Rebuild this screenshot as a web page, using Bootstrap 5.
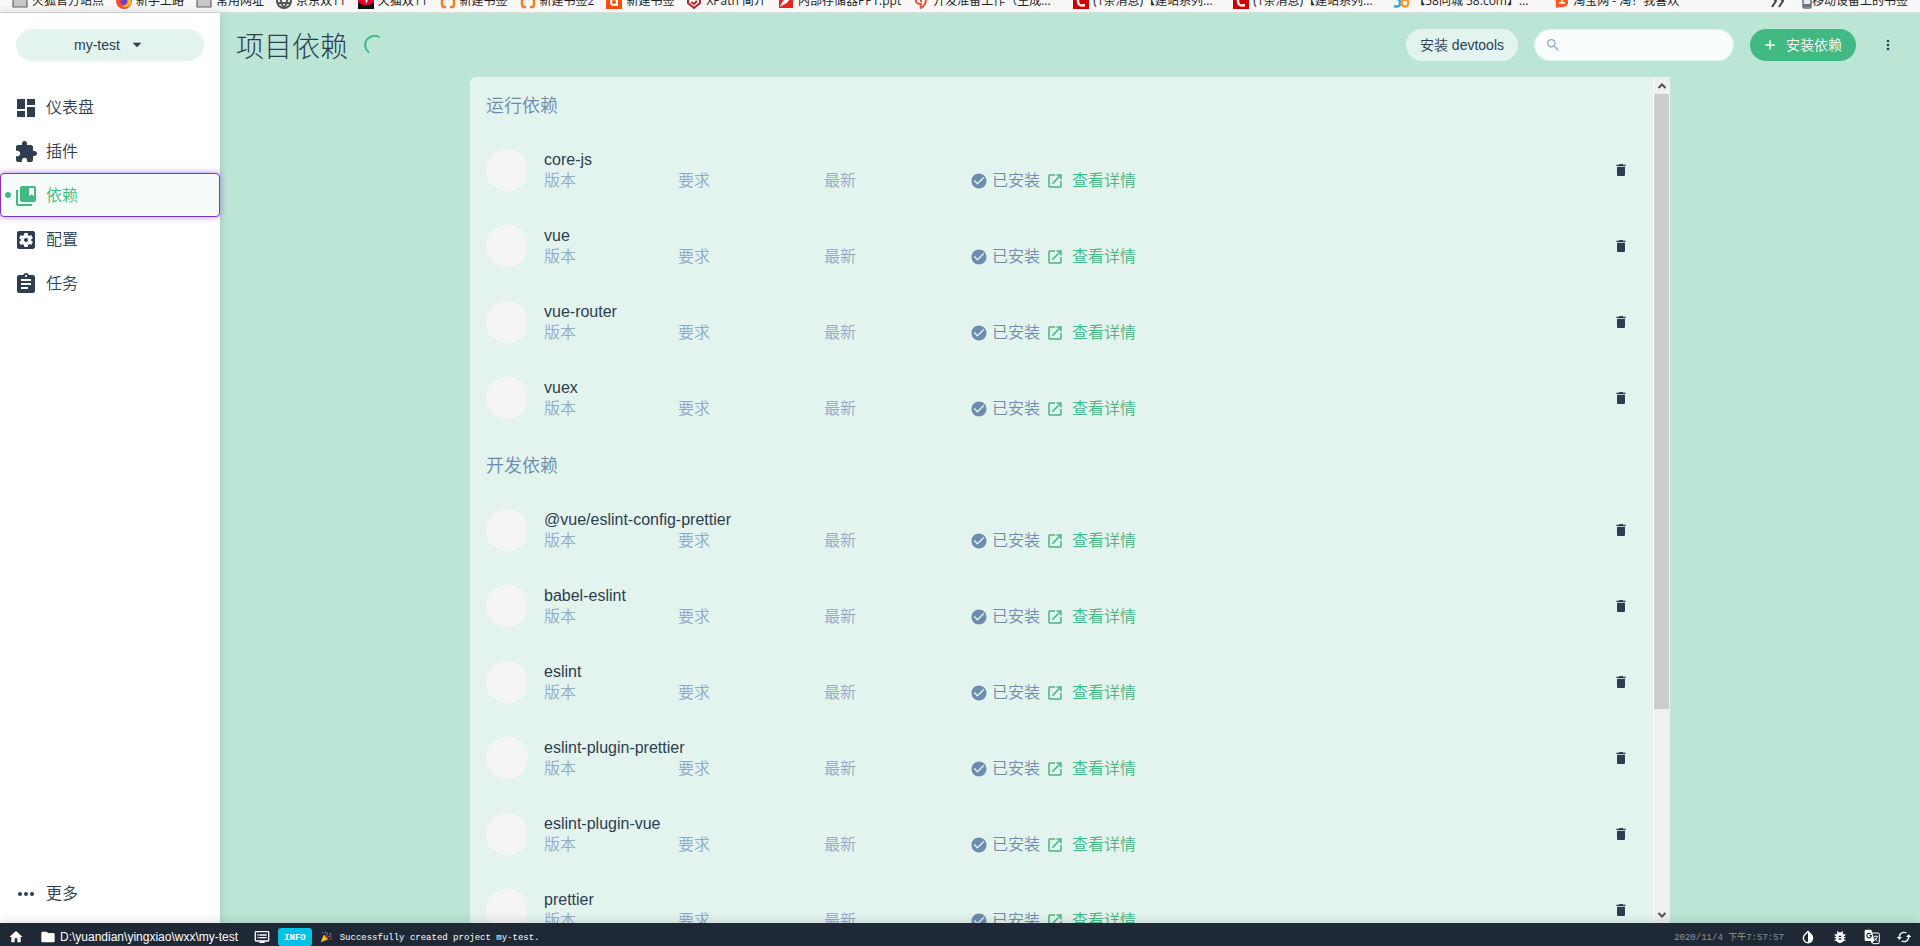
<!DOCTYPE html>
<html lang="zh-CN">
<head>
<meta charset="utf-8">
<meta name="viewport" content="width=device-width, initial-scale=1">
<title>项目依赖 - my-test</title>
<link href="https://cdn.jsdelivr.net/npm/bootstrap@5.3.0/dist/css/bootstrap.min.css" rel="stylesheet">
<style>
  :root { --ink:#2c3e50; --mint:#bbe6d6; --pale:#e3f4ee; --green:#42b983; --steel:#6b8bb0; --steel-soft:#90abc8; }
  body { font-family:"Liberation Sans","Noto Sans CJK SC",sans-serif; font-size:16px; line-height:22px; font-weight:350; color:var(--ink); }
  svg { fill:currentColor; display:block; flex:none; }
  .i16 { width:16px; height:16px; } .i18 { width:18px; height:18px; } .i24 { width:24px; height:24px; }

  /* bookmarks strip */
  .marks { height:13px; background:#f8f8f8; border-bottom:1px solid #dcdcdc; font-family:"Open Sans","Noto Sans CJK SC",sans-serif; font-size:12px; line-height:16px; padding:0 12px; font-weight:400; }
  .marks a { color:#222; height:19px; margin-right:12px; }
  .marks .wide { width:128px; }
  .marks a:last-child { margin-right:0; }

  /* sidebar */
  .side { width:220px; background:#fff; box-shadow:0 0 10px rgba(0,0,0,.15); z-index:2; }
  .pill { height:32px; border:0; border-radius:16px; font-size:14px; line-height:20px; padding:0 14px; background:var(--pale); color:var(--ink); font-weight:350; }
  .pill-green { background:var(--green); color:#fff; padding-left:12px; }
  .side .nav-link { height:44px; padding:2px 14px 0; color:var(--ink); border-radius:4px; }
  .side .nav-link.active { color:var(--green); background:#f5fbf8; border:1px solid #8130c8; padding:1px 13px 0; box-shadow:0 0 6px #b583e4; }
  .dot { position:absolute; left:4px; top:18px; width:6px; height:6px; border-radius:50%; background:var(--green); }

  /* page head */
  .head { padding:16px; }
  .head h1 { font-size:28px; line-height:32px; height:32px; padding-top:3px; font-weight:300; }
  .find { width:200px; height:32px; border-radius:16px; background:#f8fcfb; border:1px solid var(--pale); padding:0 10px; color:var(--steel-soft); }
  .find input { outline:0; min-width:0; font-size:14px; }
  .plain { border:0; background:none; padding:0; color:inherit; }

  /* dependency list */
  .panel { max-width:1200px; background:var(--pale); border-radius:6px 0 0 0; min-height:0; }
  .panel h2 { height:56px; padding:17px 16px 0; margin:0; font-size:18px; line-height:26px; font-weight:350; color:var(--steel); }
  .panel section:first-child h2 { height:55px; padding-top:16px; }
  .dep { height:76px; padding:0 24px 0 16px; }
  .dep-text { padding-top:2px; }
  .avatar { width:42px; height:42px; border-radius:50%; background:#f4f4f4; flex:none; }
  .dep-name { line-height:20px; }
  .meta { color:var(--steel-soft); }
  .col-a { width:134px; } .col-b { width:146px; }
  .state { color:var(--steel); }
  .more-link { color:var(--green); margin-left:6px; }
  .track { width:17px; background:#f0f0f0; border-left:1px solid #fff; color:#505050; }
  .thumb { background:#cdcdcd; height:615px; margin-right:1px; }

  /* status bar */
  .status-wrap { height:23px; background:#1e2935; color:#fff; z-index:3; box-shadow:0 -2px 10px rgba(0,0,0,.12); }
  .status { height:28px; padding:0 8px; font-weight:400; }
  .path { font-size:12px; line-height:20px; }
  .mono { font-family:"Liberation Mono","Noto Sans CJK SC",monospace; font-size:9px; line-height:14px; padding-top:2px; }
  .tag { background:#03c2e6; border-radius:3px; height:18px; padding:3px 6px; font-weight:700; }
  .when { color:#8e949a; }
</style>
</head>
<body class="vh-100 overflow-hidden d-flex flex-column">

<svg class="d-none">
  <symbol id="dashboard" viewBox="0 0 24 24"><path d="M3 13h8V3H3v10zm0 8h8v-6H3v6zm10 0h8V11h-8v10zm0-18v6h8V3h-8z"/></symbol>
  <symbol id="extension" viewBox="0 0 24 24"><path d="M20.5 11H19V7c0-1.1-.9-2-2-2h-4V3.500C13 2.120 11.880 1 10.500 1S8 2.120 8 3.500V5H4c-1.100 0-1.990.9-1.990 2v3.800H3.500c1.490 0 2.700 1.210 2.700 2.700s-1.210 2.700-2.700 2.700H2V20c0 1.100.9 2 2 2h3.800v-1.500c0-1.490 1.210-2.700 2.700-2.700 1.490 0 2.700 1.210 2.700 2.700V22H17c1.100 0 2-.9 2-2v-4h1.500c1.380 0 2.500-1.120 2.500-2.500S21.880 11 20.500 11z"/></symbol>
  <symbol id="books" viewBox="0 0 24 24"><path d="M4 6H2v14c0 1.100.9 2 2 2h14v-2H4V6z"/><path d="M20 2H8c-1.100 0-2 .9-2 2v12c0 1.100.9 2 2 2h12c1.100 0 2-.9 2-2V4c0-1.100-.9-2-2-2zm0 10l-2.500-1.500L15 12V4h5v8z"/></symbol>
  <symbol id="settings" viewBox="0 0 24 24"><path d="M12 10c-1.100 0-2 .9-2 2s.9 2 2 2 2-.9 2-2-.9-2-2-2zm7-7H5c-1.110 0-2 .9-2 2v14c0 1.100.89 2 2 2h14c1.110 0 2-.9 2-2V5c0-1.100-.89-2-2-2zm-1.750 9c0 .23-.02.46-.05.68l1.480 1.160c.13.11.17.3.08.45l-1.400 2.420c-.09.15-.27.21-.43.15l-1.740-.7c-.36.28-.76.51-1.180.69l-.26 1.850c-.03.17-.18.3-.35.3h-2.800c-.17 0-.32-.13-.35-.29l-.26-1.850c-.43-.18-.82-.41-1.180-.69l-1.740.7c-.16.06-.34 0-.43-.15l-1.400-2.420c-.09-.15-.05-.34.08-.45l1.480-1.160c-.03-.23-.05-.46-.05-.69 0-.23.02-.46.05-.68l-1.480-1.160c-.13-.11-.17-.3-.08-.45l1.400-2.420c.09-.15.27-.21.43-.15l1.740.7c.36-.28.76-.51 1.180-.69l.26-1.850c.03-.17.18-.3.35-.3h2.800c.17 0 .32.13.35.29l.26 1.850c.43.18.82.41 1.180.69l1.740-.7c.16-.06.34 0 .43.15l1.400 2.420c.09.15.05.34-.08.45l-1.480 1.160c.03.23.05.46.05.69z"/></symbol>
  <symbol id="tasks" viewBox="0 0 24 24"><path d="M19 3h-4.180C14.400 1.840 13.300 1 12 1c-1.300 0-2.400.84-2.820 2H5c-1.100 0-2 .9-2 2v14c0 1.100.9 2 2 2h14c1.100 0 2-.9 2-2V5c0-1.100-.9-2-2-2zm-7 0c.55 0 1 .45 1 1s-.45 1-1 1-1-.45-1-1 .45-1 1-1zm2 14H7v-2h7v2zm3-4H7v-2h10v2zm0-4H7V7h10v2z"/></symbol>
  <symbol id="dots" viewBox="0 0 24 24"><circle cx="6" cy="12" r="2"/><circle cx="12" cy="12" r="2"/><circle cx="18" cy="12" r="2"/></symbol>
  <symbol id="kebab" viewBox="0 0 24 24"><circle cx="12" cy="6" r="2"/><circle cx="12" cy="12" r="2"/><circle cx="12" cy="18" r="2"/></symbol>
  <symbol id="search" viewBox="0 0 24 24"><path d="M15.500 14h-.79l-.28-.27C15.410 12.590 16 11.110 16 9.500 16 5.910 13.090 3 9.500 3S3 5.910 3 9.500 5.910 16 9.500 16c1.610 0 3.090-.59 4.230-1.570l.27.28v.79l5 4.990L20.490 19l-4.990-5zm-6 0C7.010 14 5 11.990 5 9.500S7.010 5 9.500 5 14 7.010 14 9.500 11.990 14 9.500 14z"/></symbol>
  <symbol id="plus" viewBox="0 0 24 24"><path d="M19 13h-6v6h-2v-6H5v-2h6V5h2v6h6v2z"/></symbol>
  <symbol id="caret" viewBox="0 0 24 24"><path d="M6 9l6 6 6-6z"/></symbol>
  <symbol id="trash" viewBox="0 0 24 24"><path d="M6 19c0 1.100.9 2 2 2h8c1.100 0 2-.9 2-2V7H6v12zM19 4h-3.500l-1-1h-5l-1 1H5v2h14V4z"/></symbol>
  <symbol id="check" viewBox="0 0 24 24"><path d="M12 2C6.480 2 2 6.480 2 12s4.480 10 10 10 10-4.480 10-10S17.520 2 12 2zm-2 15l-5-5 1.410-1.410L10 14.170l7.590-7.590L19 8l-9 9z"/></symbol>
  <symbol id="open" viewBox="0 0 24 24"><path d="M19 19H5V5h7V3H5c-1.110 0-2 .9-2 2v14c0 1.100.89 2 2 2h14c1.100 0 2-.9 2-2v-7h-2v7zM14 3v2h3.590l-9.830 9.830 1.410 1.410L19 6.410V10h2V3h-7z"/></symbol>
  <symbol id="home" viewBox="0 0 24 24"><path d="M10 20v-6h4v6h5v-8h3L12 3 2 12h3v8z"/></symbol>
  <symbol id="folder" viewBox="0 0 24 24"><path d="M10 4H4c-1.100 0-1.990.9-1.990 2L2 18c0 1.100.9 2 2 2h16c1.100 0 2-.9 2-2V8c0-1.100-.9-2-2-2h-8l-2-2z"/></symbol>
  <symbol id="dvr" viewBox="0 0 24 24"><path d="M21 3H3c-1.100 0-2 .9-2 2v12c0 1.100.9 2 2 2h5v2h8v-2h5c1.100 0 1.990-.9 1.990-2L23 5c0-1.100-.9-2-2-2zm0 14H3V5h18v12zm-2-9H8v2h11V8zm0 4H8v2h11v-2zM7 8H5v2h2V8zm0 4H5v2h2v-2z"/></symbol>
  <symbol id="invert" viewBox="0 0 24 24"><path d="M17.660 7.930L12 2.270 6.340 7.930c-3.120 3.120-3.120 8.190 0 11.310C7.900 20.800 9.950 21.580 12 21.580c2.050 0 4.100-.78 5.660-2.340 3.120-3.120 3.120-8.190 0-11.310zM12 19.590c-1.600 0-3.110-.62-4.240-1.760C6.620 16.690 6 15.190 6 13.590s.62-3.110 1.760-4.240L12 5.100v14.490z"/></symbol>
  <symbol id="bug" viewBox="0 0 24 24"><path d="M20 8h-2.810c-.45-.78-1.070-1.450-1.820-1.960L17 4.410 15.590 3l-2.170 2.170C12.960 5.060 12.490 5 12 5c-.49 0-.96.06-1.410.17L8.410 3 7 4.410l1.620 1.630C7.880 6.550 7.260 7.220 6.810 8H4v2h2.090c-.05.33-.09.66-.09 1v1H4v2h2v1c0 .34.04.67.09 1H4v2h2.810c1.040 1.790 2.970 3 5.190 3s4.150-1.210 5.190-3H20v-2h-2.090c.05-.33.09-.66.09-1v-1h2v-2h-2v-1c0-.34-.04-.67-.09-1H20V8zm-6 8h-4v-2h4v2zm0-4h-4v-2h4v2z"/></symbol>
  <symbol id="translate" viewBox="0 0 24 24"><path d="M12 6h9a2 2 0 0 1 2 2v12a2 2 0 0 1-2 2h-8" fill="none" stroke="currentColor" stroke-width="1.500"/><path d="M3 1h8l5 17H3a2 2 0 0 1-2-2V3c0-1.100.9-2 2-2z"/><path d="M10 18h5l-3 4z"/><path d="M10 7.500A3.400 3.400 0 1 0 11 10H8" fill="none" stroke="#1e2935" stroke-width="1.700"/><path d="M15 11h6M18 10v1M20 11c-.5 3-2 5-4 6M16 13c1 2 2.500 4 4.500 5.500" fill="none" stroke="currentColor" stroke-width="1.300"/></symbol>
  <symbol id="sync" viewBox="0 0 24 24"><path d="M19 8l-4 4h3c0 3.310-2.690 6-6 6-1.010 0-1.970-.25-2.800-.7l-1.460 1.460C8.970 19.540 10.430 20 12 20c4.420 0 8-3.580 8-8h3l-4-4zM6 12c0-3.310 2.690-6 6-6 1.010 0 1.970.25 2.800.7l1.460-1.460C15.030 4.460 13.570 4 12 4c-4.420 0-8 3.580-8 8H1l4 4 4-4H6z"/></symbol>
  <symbol id="b-folder" viewBox="0 0 16 16"><path d="M1 2h6l1 2h7v10H1z" fill="#c9c9c9" stroke="#666" stroke-width="1.200"/></symbol>
  <symbol id="b-fox" viewBox="0 0 16 16"><circle cx="8" cy="8" r="8" fill="#ff4b2b"/><path d="M10 1c5 2 6 7 5 10-3 4-8 4-9 2 5 0 6-5 4-12z" fill="#ffb52e"/><circle cx="8" cy="8" r="3.500" fill="#6b3fd0"/></symbol>
  <symbol id="b-globe" viewBox="0 0 16 16"><g fill="none" stroke="#555" stroke-width="2"><circle cx="8" cy="8" r="7"/><path d="M1 10h14M5 2c-1 5 0 9 3 13 3-4 4-8 3-13"/></g></symbol>
  <symbol id="b-cat" viewBox="0 0 16 16"><path d="M0 0h16v16H0z" fill="#111"/><path d="M0 0h16v9q-8 7-16 0z" fill="#e60026"/><path d="M7 5h3l-1 5H8z" fill="#fff"/></symbol>
  <symbol id="b-brackets" viewBox="0 0 16 16"><path d="M6 2H4q-2 0-2 3v6q0 3 2 3h2M10 2h2q2 0 2 3v6q0 3-2 3h-2" fill="none" stroke="#ff7a1a" stroke-width="2.500"/></symbol>
  <symbol id="b-orange" viewBox="0 0 16 16"><path d="M0 0h16v16H0z" fill="#ff4d00"/><circle cx="8" cy="9" r="3" fill="none" stroke="#fff" stroke-width="2"/><path d="M11 5v8" stroke="#fff" stroke-width="2"/></symbol>
  <symbol id="b-shield" viewBox="0 0 16 16"><path d="M8 1l6 4v5l-6 5-6-5V5z" fill="none" stroke="#b3282d" stroke-width="2"/><path d="M5 9l3 2 3-3" fill="none" stroke="#b3282d" stroke-width="2"/></symbol>
  <symbol id="b-doc" viewBox="0 0 16 16"><path d="M1 1h14v14H1z" fill="#e8281e"/><path d="M2 14q2-8 11-11-2 7-8 9z" fill="#fff"/></symbol>
  <symbol id="b-flame" viewBox="0 0 16 16"><path d="M3 6q-1 5 5 5-1 3 0 4 5-3 5-9M8 3v6" fill="none" stroke="#f0503c" stroke-width="2"/></symbol>
  <symbol id="b-c" viewBox="0 0 16 16"><path d="M0 0h16v16H0z" fill="#d00000"/><path d="M12 5Q5 2 5 8t7 4" fill="none" stroke="#fff" stroke-width="2.500"/></symbol>
  <symbol id="b-58" viewBox="0 0 16 16"><path d="M1 13q6 2 6-3T2 6" fill="none" stroke="#2aa5e8" stroke-width="2.500"/><circle cx="12" cy="10" r="3.500" fill="none" stroke="#ff9420" stroke-width="2.500"/></symbol>
  <symbol id="b-tao" viewBox="0 0 16 16"><path d="M2 2h13v9q-3 4-8 3l-4 1v-3z" fill="#ff5a1f"/><path d="M6 10h6M9 5v5" stroke="#fff" stroke-width="1.500"/></symbol>
  <symbol id="b-phone" viewBox="0 0 10 16"><rect x="1" y="1" width="8" height="14" rx="1.500" fill="#e8eaf0" stroke="#68707c" stroke-width="1.500"/><path d="M1 11h8v3H1z" fill="#68707c"/></symbol>
  <symbol id="popper" viewBox="0 0 16 16"><path d="M1 15L5 5l6 6z" fill="#ffc32c"/><path d="M5 5q4 1 6 6-3 0-6-6z" fill="#a86a12"/><path d="M8 6q3-1 2-4M10 8q2-2 5-1" fill="none" stroke="#e94b5b" stroke-width="1.300"/><path d="M3 2h2v1H3zM13 3h2v2h-2z" fill="#3aa0f3"/><path d="M13 10h2v1h-2zM7 1h1v2H7z" fill="#ffc32c"/></symbol>
</svg>

<nav class="marks d-flex align-items-end overflow-hidden text-nowrap flex-shrink-0" id="marks" aria-label="书签"></nav>

<div class="d-flex flex-grow-1" style="min-height:0">
  <aside class="side d-flex flex-column flex-shrink-0 position-relative">
    <div class="p-3 d-grid">
      <button type="button" class="pill d-flex align-items-center justify-content-center gap-2"><span>my-test</span><svg class="i18"><use href="#caret"/></svg></button>
    </div>
    <nav class="nav flex-column pt-2 flex-grow-1 pb-2">
      <a class="nav-link d-flex align-items-center gap-2" href="#"><svg class="i24"><use href="#dashboard"/></svg>仪表盘</a>
      <a class="nav-link d-flex align-items-center gap-2" href="#"><svg class="i24"><use href="#extension"/></svg>插件</a>
      <a class="nav-link active d-flex align-items-center gap-2 position-relative" href="#" aria-current="page"><i class="dot"></i><svg class="i24"><use href="#books"/></svg>依赖</a>
      <a class="nav-link d-flex align-items-center gap-2" href="#"><svg class="i24"><use href="#settings"/></svg>配置</a>
      <a class="nav-link d-flex align-items-center gap-2" href="#"><svg class="i24"><use href="#tasks"/></svg>任务</a>
      <a class="nav-link d-flex align-items-center gap-2 mt-auto" href="#"><svg class="i24"><use href="#dots"/></svg>更多</a>
    </nav>
  </aside>

  <main class="flex-grow-1 d-flex flex-column" style="background:var(--mint);min-width:0">
    <header class="head d-flex align-items-center gap-3">
      <h1 class="m-0">项目依赖</h1>
      <svg width="20" height="20" viewBox="0 0 20 20" class="me-auto" role="img" aria-label="加载中"><path d="M15.500 2.500A9 9 0 0 0 5 17.500" fill="none" stroke="#42b983" stroke-width="2"/></svg>
      <button type="button" class="pill">安装 devtools</button>
      <label class="find d-flex align-items-center gap-2"><svg class="i16"><use href="#search"/></svg><input type="search" class="border-0 bg-transparent flex-grow-1" aria-label="搜索"></label>
      <button type="button" class="pill pill-green d-flex align-items-center gap-2"><svg class="i16"><use href="#plus"/></svg>安装依赖</button>
      <button type="button" class="plain px-2" aria-label="更多操作"><svg class="i16"><use href="#kebab"/></svg></button>
    </header>

    <div class="panel w-100 mx-auto flex-grow-1 d-flex overflow-hidden">
      <div class="flex-grow-1 overflow-hidden" id="deps"></div>
      <div class="track d-flex flex-column flex-shrink-0 align-items-stretch" aria-hidden="true">
        <svg width="16" height="17" viewBox="0 0 16 17"><path d="M4.500 11L8 7.500l3.500 3.500" fill="none" stroke="currentColor" stroke-width="2"/></svg>
        <div class="thumb"></div>
        <svg class="mt-auto" width="16" height="17" viewBox="0 0 16 17"><path d="M4.500 7L8 10.500 11.500 7" fill="none" stroke="currentColor" stroke-width="2"/></svg>
      </div>
    </div>
  </main>
</div>

<footer class="status-wrap overflow-hidden flex-shrink-0 position-relative">
  <div class="status d-flex align-items-center text-nowrap">
    <svg class="i16"><use href="#home"/></svg>
    <svg class="i16 ms-3"><use href="#folder"/></svg>
    <span class="path ms-1">D:\yuandian\yingxiao\wxx\my-test</span>
    <svg class="i16 ms-3 me-2"><use href="#dvr"/></svg>
    <span class="tag mono">INFO</span>
    <svg width="12" height="12" class="mx-2"><use href="#popper"/></svg>
    <span class="mono">Successfully created project my-test.</span>
    <span class="mono when ms-auto me-3">2020/11/4 下午7:57:57</span>
    <div class="d-flex gap-3">
      <svg class="i16"><use href="#invert"/></svg>
      <svg class="i16"><use href="#bug"/></svg>
      <svg class="i16"><use href="#translate"/></svg>
      <svg class="i16"><use href="#sync"/></svg>
    </div>
  </div>
</footer>

<script src="https://cdn.jsdelivr.net/npm/bootstrap@5.3.0/dist/js/bootstrap.bundle.min.js"></script>
<script>
  const bookmarks = [
    ['folder', '火狐官方站点'], ['fox', '新手上路'], ['folder', '常用网址'], ['globe', '京东双11'], ['cat', '天猫双11'],
    ['brackets', '新建书签'], ['brackets', '新建书签2'], ['orange', '新建书签'], ['shield', 'XPath 简介'], ['doc', '内部存储器PPT.ppt'],
    ['flame', '开发准备工作（生成...', 1], ['c', '(1条消息)【建站系列...', 1], ['c', '(1条消息)【建站系列...', 1],
    ['58', '【58同城 58.com】...', 1], ['tao', '淘宝网 - 淘！我喜欢', 1]
  ];
  document.getElementById('marks').innerHTML = bookmarks.map(([icon, text, wide]) =>
    `<a href="#" class="d-flex gap-1 text-decoration-none flex-shrink-0"><svg class="i16"><use href="#b-${icon}"/></svg><span class="${wide ? 'wide' : ''}">${text}</span></a>`
  ).join('') +
    `<a href="#" class="ms-auto text-decoration-none me-3" aria-label="更多书签"><svg width="16" height="16" viewBox="0 0 16 16"><path d="M2 4l4 4-4 6M9 4l4 4-4 6" fill="none" stroke="#444" stroke-width="2"/></svg></a>` +
    `<a href="#" class="d-flex text-decoration-none"><svg width="10" height="16"><use href="#b-phone"/></svg>移动设备上的书签</a>`;

  const groups = [
    ['运行依赖', ['core-js', 'vue', 'vue-router', 'vuex']],
    ['开发依赖', ['@vue/eslint-config-prettier', 'babel-eslint', 'eslint', 'eslint-plugin-prettier', 'eslint-plugin-vue', 'prettier']]
  ];
  const row = name => `
    <div class="dep d-flex align-items-center gap-3">
      <div class="avatar"></div>
      <div class="dep-text flex-grow-1">
        <div class="dep-name">${name}</div>
        <div class="meta d-flex align-items-center">
          <span class="col-a">版本</span><span class="col-b">要求</span><span class="col-b">最新</span>
          <span class="state d-flex align-items-center gap-1"><svg class="i18"><use href="#check"/></svg>已安装</span>
          <a href="#" class="more-link d-flex align-items-center gap-2 text-decoration-none"><svg class="i18"><use href="#open"/></svg>查看详情</a>
        </div>
      </div>
      <button type="button" class="plain" aria-label="卸载 ${name}"><svg class="i16"><use href="#trash"/></svg></button>
    </div>`;
  document.getElementById('deps').innerHTML = groups.map(([title, names]) => `<section><h2>${title}</h2>${names.map(row).join('')}</section>`).join('');
</script>
</body>
</html>
